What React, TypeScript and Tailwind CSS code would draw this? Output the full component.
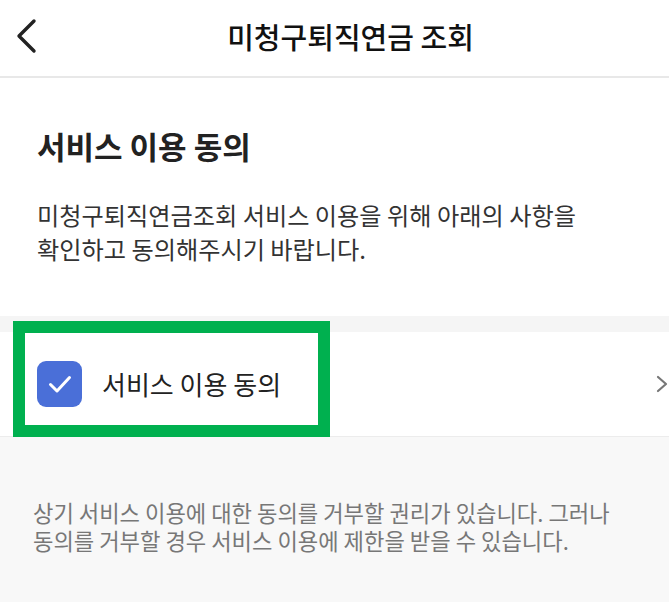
import React from 'react';

const font = { fontFamily: '"Noto Sans CJK KR", "Noto Sans", sans-serif' };

const BackIcon = () => (
  <svg width="22" height="36" viewBox="0 0 22 36" fill="none">
    <path d="M19 3L4 18l15 15" stroke="#222" strokeWidth="3.4" strokeLinecap="round" strokeLinejoin="round" />
  </svg>
);

const CheckIcon = () => (
  <svg width="26" height="22" viewBox="0 0 26 22" fill="none">
    <path d="M3.5 11.5l6.5 6.5L22.5 4.5" stroke="#fff" strokeWidth="3" strokeLinecap="round" strokeLinejoin="round" />
  </svg>
);

const ChevronRight = () => (
  <svg width="12" height="18" viewBox="0 0 12 18" fill="none">
    <path d="M2 2l8 7-8 7" stroke="#777" strokeWidth="2.2" strokeLinecap="round" strokeLinejoin="round" />
  </svg>
);

export default function App() {
  return (
    <div className="w-[669px] h-[602px] overflow-hidden bg-[#f8f8f8] flex flex-col" style={font}>
      {/* Header */}
      <header className="h-[78px] shrink-0 bg-white border-b-2 border-[#e8e8e8] flex items-center">
        <div className="w-[64px] flex items-center pl-[15px] -mt-[4px]">
          <BackIcon />
        </div>
        <h1 className="flex-1 text-center text-[29px] leading-[36px] font-medium text-[#111] -mt-[4px]">
          미청구퇴직연금 조회
        </h1>
        <div className="w-[32px]" />
      </header>

      {/* Intro */}
      <section className="bg-white px-[37px] pt-[49px] pb-[50px]">
        <h2 className="text-[31px] leading-[38px] font-bold text-[#222]">서비스 이용 동의</h2>
        <p className="mt-[33px] text-[24.2px] leading-[34px] text-[#333] break-keep">
          미청구퇴직연금조회 서비스 이용을 위해 아래의 사항을 확인하고 동의해주시기 바랍니다.
        </p>
      </section>

      <div className="h-[16px] shrink-0 bg-[#f5f5f5]" />

      {/* Agreement row */}
      <div className="relative h-[105px] shrink-0 bg-white border-b border-[#ececec] flex items-center pl-[37px] pr-[1px]">
        <div className="w-[45px] h-[46px] rounded-[9px] bg-[#4a6fd8] flex items-center justify-center">
          <CheckIcon />
        </div>
        <span className="ml-[20px] text-[26px] leading-[32px] text-[#222] flex-1">서비스 이용 동의</span>
        <ChevronRight />
        <div className="absolute -top-[11px] left-[13px] w-[317px] h-[116px] border-[12px] border-[#00b04f] pointer-events-none" />
      </div>

      {/* Notice */}
      <div className="px-[33px] pt-[61px]">
        <p className="text-[22.2px] leading-[28px] text-[#777] break-keep">
          상기 서비스 이용에 대한 동의를 거부할 권리가 있습니다. 그러나 동의를 거부할 경우 서비스 이용에 제한을 받을 수 있습니다.
        </p>
      </div>
    </div>
  );
}
